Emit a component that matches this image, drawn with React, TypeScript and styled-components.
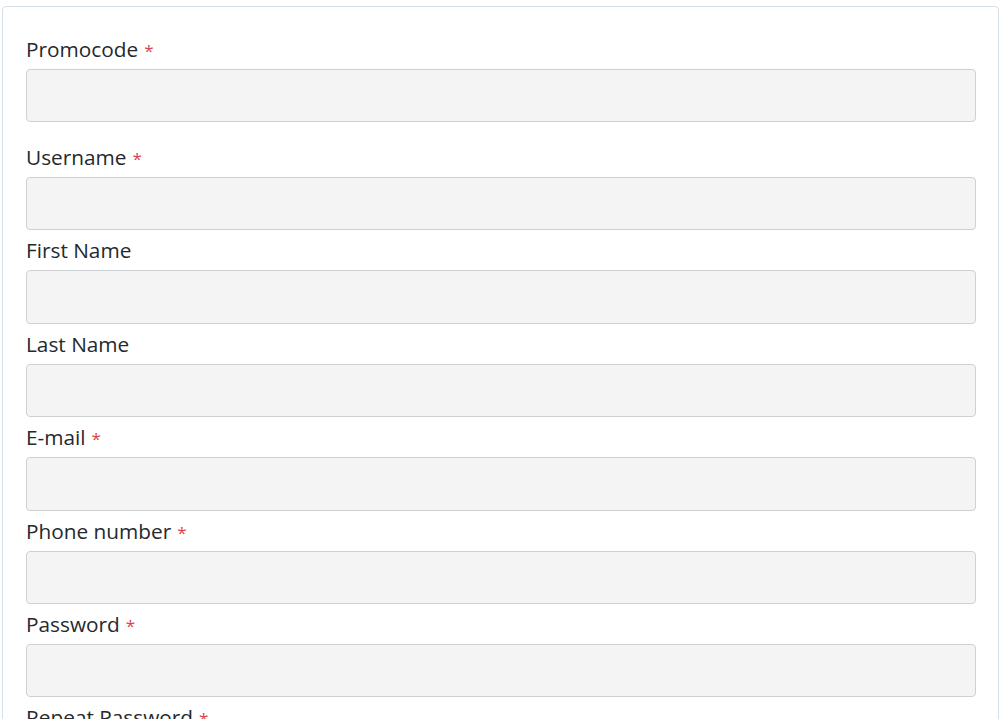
import React from "react";
import styled, { createGlobalStyle } from "styled-components";

const GlobalStyle = createGlobalStyle`
  html, body {
    margin: 0;
    padding: 0;
    background: #ffffff;
  }
  body {
    font-family: "Open Sans", "Noto Sans", sans-serif;
  }
  * { box-sizing: border-box; }
`;

const Card = styled.form`
  margin: 6px 1px 0 2px;
  border: 1px solid #d7dfe7;
  border-radius: 4px;
  padding: 29px 22px 24px 23px;
  background: #ffffff;
`;

const Group = styled.div<{ $extra?: boolean }>`
  display: flex;
  flex-direction: column;
  margin-bottom: ${(p) => (p.$extra ? "21.6px" : "7px")};
`;

const Label = styled.label`
  display: block;
  height: 27px;
  font-family: "Open Sans", "Noto Sans", sans-serif;
  font-size: 20.8px;
  line-height: 27px;
  color: #25292d;
  margin-bottom: 6px;
`;

const Required = styled.span`
  color: #d9434a;
  margin-left: 6px;
  font-size: 17px;
  line-height: 1;
`;

const Input = styled.input`
  display: block;
  width: 100%;
  height: 53.4px;
  border: 1px solid #cdd1d4;
  border-radius: 4px;
  background: #f4f4f4;
  padding: 0 14px;
  font-family: "Open Sans", "Noto Sans", sans-serif;
  font-size: 20px;
  color: #25292d;
  outline: none;
`;

type Field = { label: string; required: boolean; type: string; extra?: boolean };

const fields: Field[] = [
  { label: "Promocode", required: true, type: "text", extra: true },
  { label: "Username", required: true, type: "text" },
  { label: "First Name", required: false, type: "text" },
  { label: "Last Name", required: false, type: "text" },
  { label: "E-mail", required: true, type: "email" },
  { label: "Phone number", required: true, type: "tel" },
  { label: "Password", required: true, type: "password" },
  { label: "Repeat Password", required: true, type: "password" },
];

export default function App() {
  return (
    <>
      <GlobalStyle />
      <Card onSubmit={(e) => e.preventDefault()}>
        {fields.map((f) => (
          <Group key={f.label} $extra={f.extra}>
            <Label>
              {f.label}
              {f.required && <Required>*</Required>}
            </Label>
            <Input type={f.type} />
          </Group>
        ))}
      </Card>
    </>
  );
}
